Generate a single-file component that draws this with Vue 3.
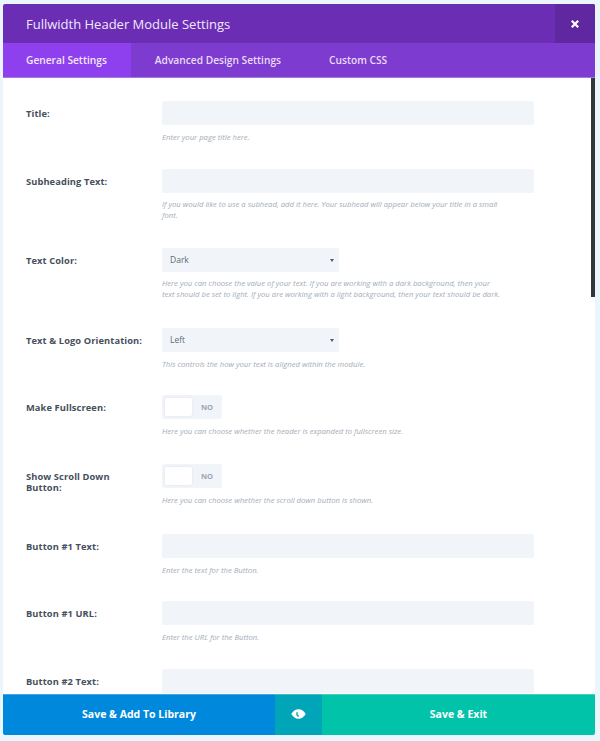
<script setup>
const rows = [
  { label: 'Title:', type: 'input', help: ['Enter your page title here.'], gap: 'g26' },
  { label: 'Subheading Text:', type: 'input', help: ['If you would like to use a subhead, add it here. Your subhead will appear below your title in a small', 'font.'], gap: 'g27' },
  { label: 'Text Color:', type: 'select', value: 'Dark', help: ['Here you can choose the value of your text. If you are working with a dark background, then your', 'text should be set to light. If you are working with a light background, then your text should be dark.'], gap: 'g28' },
  { label: 'Text & Logo Orientation:', type: 'select', value: 'Left', help: ['This controls the how your text is aligned within the module.'], gap: 'g25' },
  { label: 'Make Fullscreen:', type: 'toggle', help: ['Here you can choose whether the header is expanded to fullscreen size.'], gap: 'g27' },
  { label: 'Show Scroll Down Button:', type: 'toggle', help: ['Here you can choose whether the scroll down button is shown.'], gap: 'g28' },
  { label: 'Button #1 Text:', type: 'input', help: ['Enter the text for the Button.'], gap: 'g25' },
  { label: 'Button #1 URL:', type: 'input', help: ['Enter the URL for the Button.'], gap: 'g26' },
  { label: 'Button #2 Text:', type: 'input', help: [], gap: 'g25' },
]
</script>

<template>
  <div class="page">
    <div class="modal">
      <header class="head">
        <h1 class="title">Fullwidth Header Module Settings</h1>
        <button class="close" aria-label="Close">
          <svg width="10" height="10" viewBox="0 0 10 10"><path d="M1.800 1.800l6.400 6.400M8.200 1.800l-6.400 6.400" stroke="#fff" stroke-width="2.200" fill="none"/></svg>
        </button>
      </header>
      <nav class="tabs">
        <span class="tab active">General Settings</span>
        <span class="tab">Advanced Design Settings</span>
        <span class="tab">Custom CSS</span>
      </nav>
      <main class="body">
        <div class="scrollbar"></div>
        <section v-for="r in rows" :key="r.label" class="row" :class="r.gap">
          <div class="label">{{ r.label }}</div>
          <div class="field">
            <div v-if="r.type === 'input'" class="input"></div>
            <div v-else-if="r.type === 'select'" class="select">
              <span>{{ r.value }}</span>
              <i class="caret"></i>
            </div>
            <div v-else class="toggle">
              <span class="knob"></span>
              <span class="no">NO</span>
            </div>
            <p v-if="r.help.length" class="help" :class="{ two: r.help.length > 1 }">
              <span v-for="l in r.help" :key="l" class="line">{{ l }}</span>
            </p>
          </div>
        </section>
      </main>
      <footer class="foot">
        <button class="btn lib">Save &amp; Add To Library</button>
        <button class="btn eye" aria-label="Preview">
          <svg width="15" height="10" viewBox="0 0 15 10">
            <path d="M0.300 5C2 2 4.500.200 7.500.200S13 2 14.700 5C13 8 10.500 9.800 7.500 9.800S2 8 .300 5z" fill="#fff"/>
            <path d="M6 3.300v2.500q0 1.200 2 1.300" stroke="#00a5b8" stroke-width="1.400" fill="none"/>
          </svg>
        </button>
        <button class="btn exit">Save &amp; Exit</button>
      </footer>
    </div>
  </div>
</template>

<style>
body { background: #eaf6fb; }
</style>

<style scoped>
.page {
  width: 600px;
  height: 741px;
  padding: 4px 5px 6px 3px;
  box-sizing: border-box;
  background: #eaf6fb;
  font-family: "Open Sans", sans-serif;
  overflow: hidden;
}
.modal {
  height: 731px;
  display: flex;
  flex-direction: column;
  background: #fff;
  border-radius: 2px;
  overflow: hidden;
}
.head {
  height: 39px;
  flex: none;
  display: flex;
  align-items: center;
  justify-content: space-between;
  background: #6a2db3;
  padding-left: 23px;
}
.title {
  margin: 0;
  font-size: 13px;
  font-weight: 500;
  color: #f1e9fb;
}
.close {
  width: 40px;
  height: 39px;
  border: 0;
  padding: 0;
  background: #5f28a1;
  display: flex;
  align-items: center;
  justify-content: center;
}
.tabs {
  height: 34px;
  flex: none;
  display: flex;
  background: #7e3bd0;
  font-size: 10.200px;
  font-weight: 600;
  color: #e9dcf8;
  border-bottom: 1px solid #a778e0;
}
.tab {
  display: flex;
  align-items: center;
  padding: 0 24px;
}
.tab.active {
  padding-left: 23px;
  background: #8e3fee;
  color: #f1e9fb;
}
.body {
  flex: 1;
  position: relative;
  overflow: hidden;
  padding: 23px 0 0 23px;
  min-height: 0;
}
.scrollbar {
  position: absolute;
  right: 0;
  top: 0;
  width: 4px;
  height: 219px;
  background: #32373c;
}
.row {
  display: flex;
}
.g25 { margin-bottom: 25px; }
.g26 { margin-bottom: 26px; }
.g27 { margin-bottom: 27px; }
.g28 { margin-bottom: 28px; }
.label {
  width: 136px;
  flex: none;
  box-sizing: border-box;
  padding: 7px 17px 0 0;
  font-size: 9.300px;
  font-weight: 700;
  line-height: 11px;
  color: #46505c;
  letter-spacing: 0.100px;
}
.field { width: 372px; flex: none; }
.input {
  height: 24px;
  background: #f1f5f9;
  border-radius: 2px;
}
.select {
  width: 177px;
  height: 24px;
  background: #f1f5f9;
  border-radius: 2px;
  display: flex;
  align-items: center;
  justify-content: space-between;
  padding: 0 0 2px 8px;
  box-sizing: border-box;
  font-size: 8.500px;
  color: #5f6a76;
}
.caret {
  width: 0;
  height: 0;
  margin: 2px 5px 0 0;
  border-left: 2px solid transparent;
  border-right: 2px solid transparent;
  border-top: 3px solid #4c5866;
}
.toggle {
  width: 60px;
  height: 24px;
  background: #f1f5f9;
  border-radius: 2px;
  display: flex;
  align-items: center;
}
.knob {
  width: 27px;
  height: 18px;
  margin-left: 3px;
  background: #fff;
  border-radius: 2px;
  box-shadow: 0 0 3px rgba(0,0,0,.08);
}
.no {
  margin-left: 9px;
  font-size: 7.500px;
  font-weight: 700;
  color: #9aa5b1;
}
.help {
  margin: 7px 0 0;
  font-size: 7.700px;
  font-style: italic;
  line-height: 11px;
  color: #a3adb8;
}
.help.two { margin-top: 6px; }
.line { display: block; }
.foot {
  height: 41px;
  flex: none;
  display: flex;
  position: relative;
}
.btn {
  border: 0;
  padding: 0 0 2px;
  height: 41px;
  font-family: inherit;
  font-size: 10.500px;
  font-weight: 700;
  color: #fff;
  display: flex;
  align-items: center;
  justify-content: center;
}
.lib { width: 272px; background: #0089dc; box-shadow: inset 0 1px 0 #40a6e5; }
.eye { width: 47px; background: #00a5b8; box-shadow: inset 0 1px 0 #40bbca; }
.exit { flex: 1; background: #00c3aa; box-shadow: inset 0 1px 0 #40d2bf; }
</style>
